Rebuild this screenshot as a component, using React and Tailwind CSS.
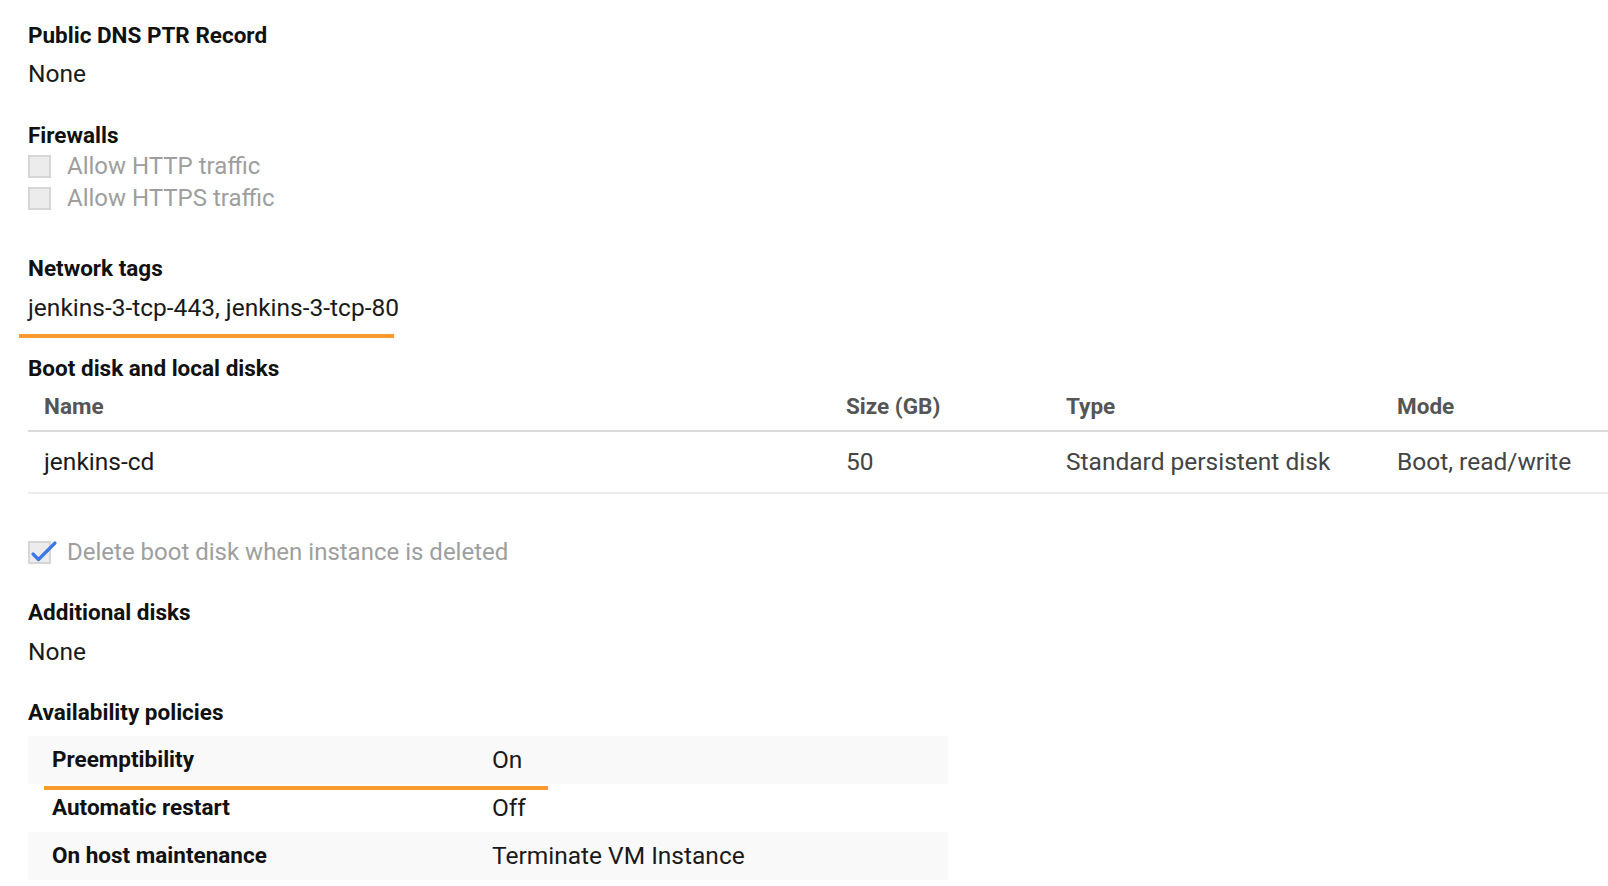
function Heading({ children, className = "" }) {
  return (
    <div className={`text-[22.5px] leading-[28px] font-bold text-[#111] ${className}`}>
      {children}
    </div>
  );
}

function Value({ children, className = "" }) {
  return (
    <div className={`text-[24.5px] leading-[32px] text-[#1a1a1a] ${className}`}>
      {children}
    </div>
  );
}

function Checkbox({ label, checked }) {
  return (
    <div className="flex items-center h-[32px]">
      <div className="relative w-[23px] h-[23px] bg-[#ececec] border-2 border-[#d6d6d6] shrink-0">
        {checked && (
          <svg
            className="absolute -left-[1px] -top-[3px]"
            width="30"
            height="26"
            viewBox="0 0 30 26"
            fill="none"
          >
            <path
              d="M4 14 L9.5 19.5 L26 3"
              stroke="#3b78e7"
              strokeWidth="3.2"
              strokeLinecap="round"
              strokeLinejoin="round"
            />
          </svg>
        )}
      </div>
      <span className="ml-[16px] text-[24px] leading-[32px] text-[#9e9e9e]">{label}</span>
    </div>
  );
}

const policies = [
  { label: "Preemptibility", value: "On", shaded: true, mark: true },
  { label: "Automatic restart", value: "Off" },
  { label: "On host maintenance", value: "Terminate VM Instance", shaded: true },
];

export default function App() {
  return (
    <div
      className="min-h-screen bg-white pl-[28px] pt-[21px]"
      style={{ fontFamily: "Roboto, 'Liberation Sans', sans-serif" }}
    >
      {/* Public DNS */}
      <Heading>Public DNS PTR Record</Heading>
      <Value className="mt-[9px]">None</Value>

      {/* Firewalls */}
      <Heading className="mt-[31px]">Firewalls</Heading>
      <div className="mt-[1px]">
        <Checkbox label="Allow HTTP traffic" />
        <Checkbox label="Allow HTTPS traffic" />
      </div>

      {/* Network tags */}
      <Heading className="mt-[40px]">Network tags</Heading>
      <Value className="mt-[10px]">jenkins-3-tcp-443, jenkins-3-tcp-80</Value>
      <div className="mt-[10px] -ml-[9px] w-[375px] h-[4px] bg-[#fb9a2d]" />

      {/* Boot disk */}
      <Heading className="mt-[16px]">Boot disk and local disks</Heading>
      <div>
        <div className="grid grid-cols-[818px_220px_331px_1fr] items-center h-[50px] border-b-2 border-[#dadada] text-[22.5px] font-bold text-[#555]">
          <div className="pl-[16px] pt-[2px]">Name</div>
          <div className="pt-[2px]">Size (GB)</div>
          <div className="pt-[2px]">Type</div>
          <div className="pt-[2px]">Mode</div>
        </div>
        <div className="grid grid-cols-[818px_220px_331px_1fr] items-center h-[62px] border-b-2 border-[#ececec] text-[24.5px]">
          <div className="pl-[16px] text-[#1a1a1a]">jenkins-cd</div>
          <div className="text-[#444]">50</div>
          <div className="text-[#444]">Standard persistent disk</div>
          <div className="text-[#444]">Boot, read/write</div>
        </div>
      </div>

      <div className="mt-[42px]">
        <Checkbox label="Delete boot disk when instance is deleted" checked />
      </div>

      {/* Additional disks */}
      <Heading className="mt-[30px]">Additional disks</Heading>
      <Value className="mt-[10px]">None</Value>

      {/* Availability */}
      <Heading className="mt-[30px]">Availability policies</Heading>
      <div className="mt-[10px] w-[920px]">
        {policies.map((p) => (
          <div
            key={p.label}
            className={`relative grid grid-cols-[464px_1fr] items-center h-[48px] ${
              p.shaded ? "bg-[#f9f9f9]" : "bg-white"
            }`}
          >
            <div className="pl-[24px] text-[22.5px] font-bold text-[#111]">{p.label}</div>
            <div className="text-[24.5px] text-[#1a1a1a]">{p.value}</div>
            {p.mark && (
              <div className="absolute left-[16px] top-[50px] w-[504px] h-[4px] bg-[#fb9a2d] z-10" />
            )}
          </div>
        ))}
      </div>
    </div>
  );
}
